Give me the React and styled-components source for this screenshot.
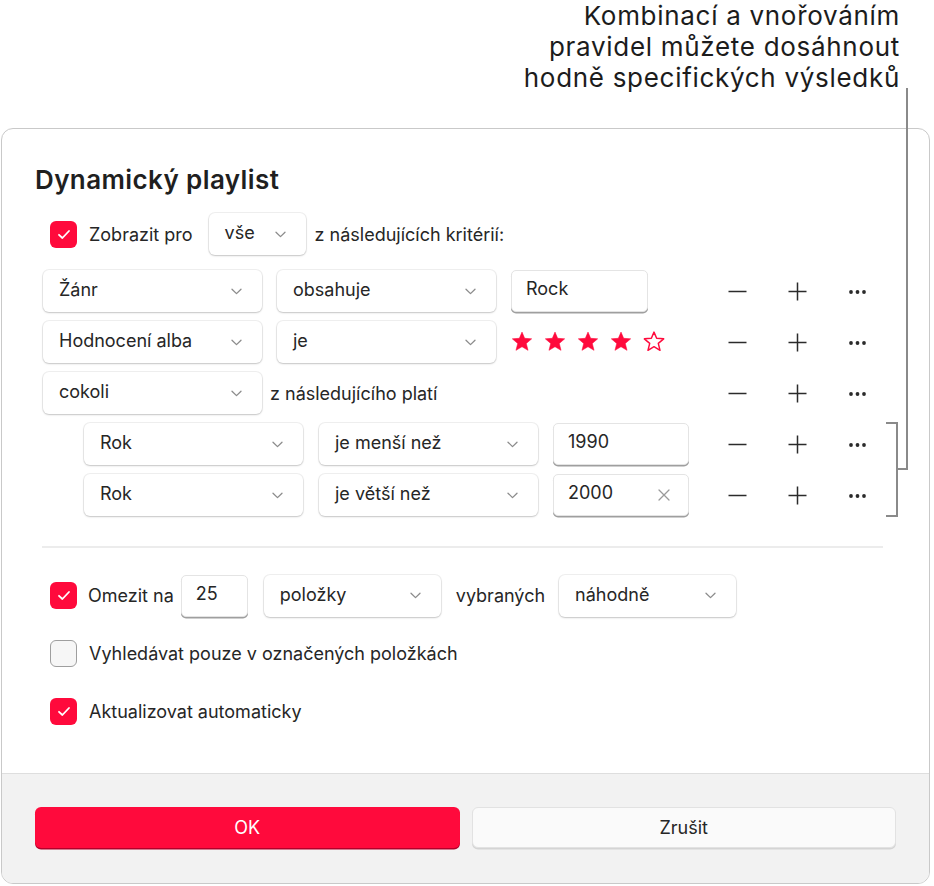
import React from "react";
import styled, { createGlobalStyle } from "styled-components";

const RED = "#ff0a3c";

const Global = createGlobalStyle`
  html, body { margin: 0; padding: 0; background: #ffffff; }
  body { font-family: Inter, "Noto Sans", sans-serif; color: #262626; }
  * { box-sizing: border-box; }
`;

const Page = styled.div`
  position: relative;
  width: 934px;
  height: 886px;
  overflow: hidden;
`;

const Callout = styled.div`
  padding-right: 34px;
  text-align: right;
  font-size: 26px;
  line-height: 31px;
  letter-spacing: 0.7px;
  color: #1c1c1c;
  height: 93px;
`;

const Leader = styled.svg`
  position: absolute;
  left: 0;
  top: 0;
  pointer-events: none;
`;

const Dialog = styled.div`
  margin: 35px 0 0 1px;
  width: 929px;
  height: 756px;
  border: 1px solid #c9c9c9;
  border-radius: 12px;
  overflow: hidden;
  display: flex;
  flex-direction: column;
  background: #fff;
`;

const Body = styled.div`
  flex: 1;
  padding: 35px 0 0 33px;
`;

const Title = styled.h1`
  margin: 0;
  font-size: 26px;
  line-height: 31px;
  font-weight: 600;
  color: #1f1f1f;
  letter-spacing: 0.4px;
`;

const Row = styled.div`
  display: flex;
  align-items: center;
  height: 42px;
  margin-left: ${(p) => p.$indent || 0}px;
  margin-top: ${(p) => p.$mt || 0}px;
`;

const Label = styled.span`
  font-size: 18px;
  color: #262626;
  margin-left: ${(p) => p.$ml || 0}px;
  margin-right: ${(p) => p.$mr || 0}px;
  white-space: nowrap;
`;

const Box = styled.div`
  width: 27px;
  height: 27px;
  border-radius: 6px;
  flex: none;
  display: flex;
  align-items: center;
  justify-content: center;
  background: ${(p) => (p.$checked ? RED : "#f6f6f6")};
  border: ${(p) => (p.$checked ? "none" : "1.5px solid #9e9e9e")};
`;

const Checkbox = ({ checked }) => (
  <Box $checked={checked}>
    {checked && (
      <svg width="14" height="11" viewBox="0 0 14 11">
        <path d="M2 5.8 L5.4 9 L12 2" fill="none" stroke="#fff" strokeWidth="1.8" strokeLinecap="round" strokeLinejoin="round" />
      </svg>
    )}
  </Box>
);

const SelectBox = styled.div`
  width: ${(p) => p.$w}px;
  height: 42px;
  flex: none;
  margin-left: ${(p) => p.$ml || 0}px;
  border-radius: 6px;
  background: #fff;
  box-shadow: 0 0 0 1px rgba(0, 0, 0, 0.06), 0 1px 2px rgba(0, 0, 0, 0.18);
  display: flex;
  align-items: center;
  justify-content: space-between;
  padding: 0 20px 3px 16px;
  font-size: 18px;
  color: #262626;
`;

const Chevron = () => (
  <svg width="11" height="7" viewBox="0 0 11 7" style={{ marginTop: 3 }}>
    <path d="M1 1.2 L5.5 5.6 L10 1.2" fill="none" stroke="#8c8c8c" strokeWidth="1.3" strokeLinecap="round" strokeLinejoin="round" />
  </svg>
);

const Select = ({ w, ml, children }) => (
  <SelectBox $w={w} $ml={ml}>
    <span>{children}</span>
    <Chevron />
  </SelectBox>
);

const Field = styled.div`
  width: ${(p) => p.$w}px;
  height: 42px;
  flex: none;
  margin-left: ${(p) => p.$ml || 0}px;
  border-radius: 5px;
  background: #fff;
  border: 1px solid #e4e4e4;
  box-shadow: 0 1.5px 0 #9f9f9f;
  display: flex;
  align-items: center;
  justify-content: space-between;
  padding: 0 14px 5px 14px;
  font-size: 18px;
  color: #262626;
`;

const Clear = () => (
  <svg width="12" height="12" viewBox="0 0 12 12" style={{ marginTop: 5, marginRight: 4 }}>
    <path d="M1 1 L11 11 M11 1 L1 11" stroke="#9a9a9a" strokeWidth="1.3" strokeLinecap="round" />
  </svg>
);

const Rules = styled.div`
  margin: 15px 0 0 8px;
  width: 844px;
  display: flex;
  flex-direction: column;
  gap: 9px;
`;

const RuleRow = styled.div`
  display: grid;
  grid-template-columns: 1fr 60px 60px 60px;
  align-items: center;
  height: 42px;
`;

const RuleContent = styled.div`
  display: flex;
  align-items: center;
  padding-left: ${(p) => p.$indent || 0}px;
`;

const Action = styled.div`
  display: flex;
  align-items: center;
  justify-content: center;
  height: 42px;
`;

const Minus = () => (
  <svg width="19" height="19" viewBox="0 0 19 19">
    <path d="M0.5 9.5 H18.5" stroke="#2b2b2b" strokeWidth="1.5" />
  </svg>
);
const Plus = () => (
  <svg width="19" height="19" viewBox="0 0 19 19">
    <path d="M0.5 9.5 H18.5 M9.5 0.5 V18.5" stroke="#2b2b2b" strokeWidth="1.5" />
  </svg>
);
const Dots = () => (
  <svg width="19" height="19" viewBox="0 0 19 19">
    <circle cx="3" cy="10" r="1.9" fill="#2b2b2b" />
    <circle cx="9.5" cy="10" r="1.9" fill="#2b2b2b" />
    <circle cx="16" cy="10" r="1.9" fill="#2b2b2b" />
  </svg>
);

const Stars = styled.div`
  display: flex;
  gap: 11px;
  margin-left: 15px;
  margin-top: -2px;
`;

const Star = ({ filled }) => (
  <svg width="22" height="21" viewBox="0 0 24 23">
    <path
      d="M12 1.2 L14.9 8 L22.6 8.6 L16.7 13.6 L18.6 21.2 L12 17.2 L5.4 21.2 L7.3 13.6 L1.4 8.6 L9.1 8 Z"
      fill={filled ? RED : "#fff"}
      stroke={RED}
      strokeWidth={filled ? 0.6 : 1.6}
      strokeLinejoin="round"
    />
  </svg>
);

const Separator = styled.div`
  margin: 30px 0 0 7px;
  width: 841px;
  height: 1.5px;
  background: #ececec;
`;

const Footer = styled.div`
  height: 110px;
  flex: none;
  background: #f2f2f2;
  border-top: 1px solid #dedede;
  display: grid;
  grid-template-columns: 1fr 1fr;
  gap: 12px;
  padding: 33px 33px 0 33px;
`;

const Button = styled.button`
  height: 41px;
  border-radius: 6px;
  font-family: Inter, "Noto Sans", sans-serif;
  font-size: 18px;
  cursor: pointer;
  color: ${(p) => (p.$primary ? "#fff" : "#262626")};
  background: ${(p) => (p.$primary ? RED : "#fafafa")};
  border: ${(p) => (p.$primary ? "none" : "1px solid #e2e2e2")};
  box-shadow: ${(p) => (p.$primary ? "0 1.5px 0 #b3002a" : "0 1.5px 0 #d4d4d4")};
`;

const Actions = () => (
  <>
    <Action><Minus /></Action>
    <Action><Plus /></Action>
    <Action><Dots /></Action>
  </>
);

export default function App() {
  return (
    <Page>
      <Global />
      <Callout>
        Kombinací a vnořováním
        <br />
        pravidel můžete dosáhnout
        <br />
        hodně specifických výsledků
      </Callout>
      <Dialog>
        <Body>
          <Title>Dynamický playlist</Title>
          <Row $indent={15} $mt={18}>
            <Checkbox checked />
            <Label $ml={12}>Zobrazit pro</Label>
            <Select w={97} ml={16}>vše</Select>
            <Label $ml={9}>z následujících kritérií:</Label>
          </Row>
          <Rules>
            <RuleRow>
              <RuleContent>
                <Select w={219}>Žánr</Select>
                <Select w={219} ml={15}>obsahuje</Select>
                <Field $w={137} $ml={15}>Rock</Field>
              </RuleContent>
              <Actions />
            </RuleRow>
            <RuleRow>
              <RuleContent>
                <Select w={219}>Hodnocení alba</Select>
                <Select w={219} ml={15}>je</Select>
                <Stars>
                  <Star filled />
                  <Star filled />
                  <Star filled />
                  <Star filled />
                  <Star />
                </Stars>
              </RuleContent>
              <Actions />
            </RuleRow>
            <RuleRow>
              <RuleContent>
                <Select w={219}>cokoli</Select>
                <Label $ml={8}>z následujícího platí</Label>
              </RuleContent>
              <Actions />
            </RuleRow>
            <RuleRow>
              <RuleContent $indent={41}>
                <Select w={219}>Rok</Select>
                <Select w={219} ml={16}>je menší než</Select>
                <Field $w={136} $ml={15}>1990</Field>
              </RuleContent>
              <Actions />
            </RuleRow>
            <RuleRow>
              <RuleContent $indent={41}>
                <Select w={219}>Rok</Select>
                <Select w={219} ml={16}>je větší než</Select>
                <Field $w={136} $ml={15}>
                  <span>2000</span>
                  <Clear />
                </Field>
              </RuleContent>
              <Actions />
            </RuleRow>
          </Rules>
          <Separator />
          <Row $indent={15} $mt={27}>
            <Checkbox checked />
            <Label $ml={11} $mr={7}>Omezit na</Label>
            <Field $w={67}>25</Field>
            <Select w={177} ml={16}>položky</Select>
            <Label $ml={15} $mr={14}>vybraných</Label>
            <Select w={177}>náhodně</Select>
          </Row>
          <Row $indent={15} $mt={16}>
            <Checkbox />
            <Label $ml={12}>Vyhledávat pouze v označených položkách</Label>
          </Row>
          <Row $indent={15} $mt={16}>
            <Checkbox checked />
            <Label $ml={12}>Aktualizovat automaticky</Label>
          </Row>
        </Body>
        <Footer>
          <Button $primary>OK</Button>
          <Button>Zrušit</Button>
        </Footer>
      </Dialog>
      <Leader width="934" height="886" viewBox="0 0 934 886">
        <path d="M907 88 V469 H897 M886 423 H897 V516 H886" fill="none" stroke="#8a8a8a" strokeWidth="2" />
      </Leader>
    </Page>
  );
}
